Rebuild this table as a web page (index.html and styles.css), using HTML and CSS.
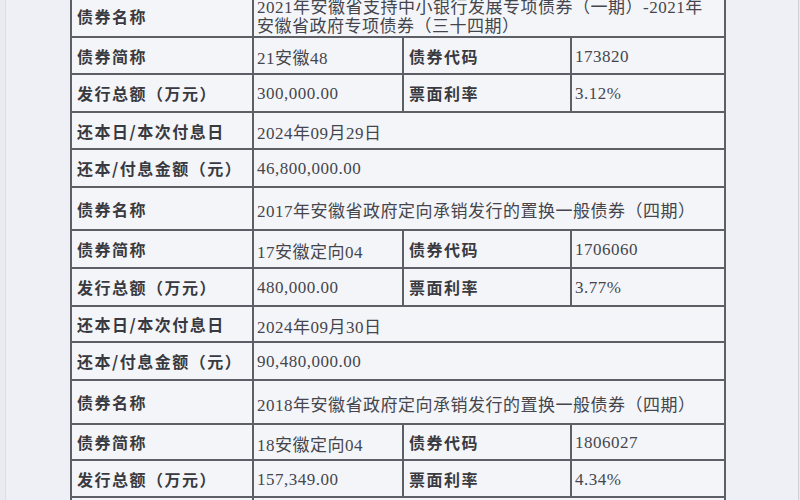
FILE: index.html
```html
<!DOCTYPE html>
<html lang="zh-CN">
<head>
<meta charset="utf-8">
<title>债券信息</title>
<link rel="stylesheet" href="styles.css">
</head>
<body>
<div class="paper">
  <table class="bonds">
    <colgroup>
      <col class="c1"><col class="c2"><col class="c3"><col class="c4">
    </colgroup>
    <tbody>
      <tr class="first">
        <td class="lab">债券名称</td>
        <td class="val multi" colspan="3">2021年安徽省支持中小银行发展专项债券（一期）-2021年<br>安徽省政府专项债券（三十四期）</td>
      </tr>
      <tr>
        <td class="lab">债券简称</td>
        <td class="val">21安徽48</td>
        <td class="lab">债券代码</td>
        <td class="val">173820</td>
      </tr>
      <tr class="tall1">
        <td class="lab">发行总额（万元）</td>
        <td class="val">300,000.00</td>
        <td class="lab">票面利率</td>
        <td class="val">3.12%</td>
      </tr>
      <tr>
        <td class="lab">还本日/本次付息日</td>
        <td class="val" colspan="3">2024年09月29日</td>
      </tr>
      <tr class="tall1">
        <td class="lab">还本/付息金额（元）</td>
        <td class="val" colspan="3">46,800,000.00</td>
      </tr>
      <tr class="name">
        <td class="lab">债券名称</td>
        <td class="val" colspan="3">2017年安徽省政府定向承销发行的置换一般债券（四期）</td>
      </tr>
      <tr class="tall1">
        <td class="lab">债券简称</td>
        <td class="val">17安徽定向04</td>
        <td class="lab">债券代码</td>
        <td class="val">1706060</td>
      </tr>
      <tr class="tall1">
        <td class="lab">发行总额（万元）</td>
        <td class="val">480,000.00</td>
        <td class="lab">票面利率</td>
        <td class="val">3.77%</td>
      </tr>
      <tr class="short">
        <td class="lab">还本日/本次付息日</td>
        <td class="val" colspan="3">2024年09月30日</td>
      </tr>
      <tr class="tall1">
        <td class="lab">还本/付息金额（元）</td>
        <td class="val" colspan="3">90,480,000.00</td>
      </tr>
      <tr class="name2">
        <td class="lab">债券名称</td>
        <td class="val" colspan="3">2018年安徽省政府定向承销发行的置换一般债券（四期）</td>
      </tr>
      <tr class="short">
        <td class="lab">债券简称</td>
        <td class="val">18安徽定向04</td>
        <td class="lab">债券代码</td>
        <td class="val">1806027</td>
      </tr>
      <tr>
        <td class="lab">发行总额（万元）</td>
        <td class="val">157,349.00</td>
        <td class="lab">票面利率</td>
        <td class="val">4.34%</td>
      </tr>
      <tr>
        <td class="lab"></td>
        <td class="val" colspan="3"></td>
      </tr>
    </tbody>
  </table>
</div>
</body>
</html>
```

FILE: styles.css
```css
html, body {
  margin: 0;
  padding: 0;
  height: 500px;
  overflow: hidden;
  background: #e9ebf1;
}

.paper {
  margin: 0 1px 0 5px;
  height: 500px;
  background: #eef0f5;
  border-left: 1px solid #dcdee4;
  border-right: 1px solid #cfd1d8;
  overflow: hidden;
}

.bonds {
  margin: -7px 0 0 64px;
  width: 656px;
  table-layout: fixed;
  border-collapse: collapse;
  background: #f4f5f9;
  font-family: "Liberation Serif", "Noto Sans CJK SC", serif;
  color: #404148;
}

.c1 { width: 182px; }
.c2 { width: 150px; }
.c3 { width: 168px; }
.c4 { width: 154px; }

.bonds td {
  border: 2px solid #5d5f66;
  height: 37px;
  padding: 0 0 0 3px;
  vertical-align: middle;
  white-space: nowrap;
  overflow: hidden;
  box-sizing: border-box;
}

.bonds .lab {
  padding-left: 5px;
  font-family: "Noto Sans CJK SC", sans-serif;
  font-weight: 700;
  font-size: 16px;
  letter-spacing: 1.5px;
  color: #393a40;
}

.bonds .val {
  padding-top: 2px;
  font-size: 17px;
  letter-spacing: 0.5px;
  color: #45464d;
}

.bonds .multi {
  line-height: 19px;
  padding-top: 3px;
}

.first td { height: 42px; }
.tall1 td { height: 38px; }
.short td { height: 36px; }
.name td { height: 43px; }
.name2 td { height: 44px; }
```
